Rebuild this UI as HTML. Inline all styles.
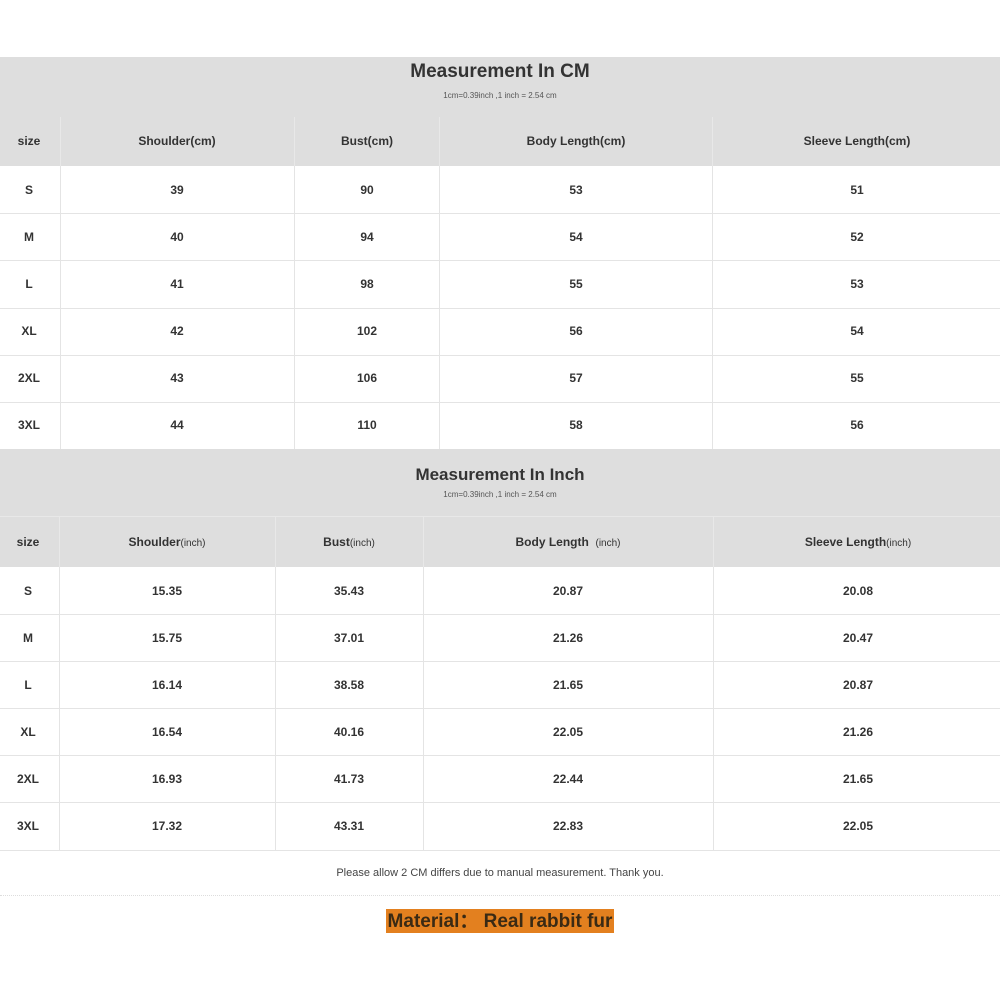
<!DOCTYPE html>
<html><head><style>
body{margin:0;width:1000px;height:1000px;background:#fff;position:relative;font-family:"Liberation Sans","DejaVu Sans",sans-serif;overflow:hidden}
.a{position:absolute}
.g{background:#dedede;left:0;width:1000px}
.t{text-align:center;color:#333;font-weight:bold}
.c{position:absolute;text-align:center;font-size:12px;font-weight:bold;color:#333;transform:translateX(-50%);white-space:nowrap}
.hl{position:absolute;left:0;width:1000px;height:1px;background:#e4e4e4}
.vl{position:absolute;width:1px;background:#e4e4e4}
</style></head><body>
<div class="a g" style="top:57px;height:109px"></div>
<div class="a t" style="top:61px;width:1000px;font-size:19px">Measurement In CM</div>
<div class="a" style="top:91px;width:1000px;text-align:center;font-size:8px;color:#555">1cm=0.39inch ,1 inch = 2.54 cm</div>
<div class="vl" style="left:60px;top:117px;height:49px;background:#e8e8e8"></div>
<div class="vl" style="left:294px;top:117px;height:49px;background:#e8e8e8"></div>
<div class="vl" style="left:439px;top:117px;height:49px;background:#e8e8e8"></div>
<div class="vl" style="left:712px;top:117px;height:49px;background:#e8e8e8"></div>
<div class="vl" style="left:60px;top:166px;height:283px"></div>
<div class="vl" style="left:294px;top:166px;height:283px"></div>
<div class="vl" style="left:439px;top:166px;height:283px"></div>
<div class="vl" style="left:712px;top:166px;height:283px"></div>
<div class="hl" style="top:213px"></div><div class="hl" style="top:260px"></div><div class="hl" style="top:308px"></div><div class="hl" style="top:355px"></div><div class="hl" style="top:402px"></div>

<div class="a g" style="top:449px;height:118px"></div>
<div class="a t" style="top:465px;width:1000px;font-size:17px">Measurement In Inch</div>
<div class="a" style="top:490px;width:1000px;text-align:center;font-size:8px;color:#555">1cm=0.39inch ,1 inch = 2.54 cm</div>
<div class="hl" style="top:516px;background:#e8e8e8"></div>
<div class="vl" style="left:59px;top:517px;height:50px;background:#e8e8e8"></div>
<div class="vl" style="left:275px;top:517px;height:50px;background:#e8e8e8"></div>
<div class="vl" style="left:423px;top:517px;height:50px;background:#e8e8e8"></div>
<div class="vl" style="left:713px;top:517px;height:50px;background:#e8e8e8"></div>
<div class="vl" style="left:59px;top:567px;height:283px"></div>
<div class="vl" style="left:275px;top:567px;height:283px"></div>
<div class="vl" style="left:423px;top:567px;height:283px"></div>
<div class="vl" style="left:713px;top:567px;height:283px"></div>
<div class="hl" style="top:614px"></div><div class="hl" style="top:661px"></div><div class="hl" style="top:708px"></div><div class="hl" style="top:755px"></div><div class="hl" style="top:802px"></div><div class="hl" style="top:850px"></div>
<div class="a" style="top:895px;left:0;width:1000px;border-top:1px dotted #ddd"></div>

<div id="cells"></div>
<div class="a" style="top:867px;width:1000px;text-align:center;font-size:11px;color:#444">Please allow 2 CM differs due to manual measurement. Thank you.</div>
<div class="a" style="top:909px;left:386px;width:228px;height:24px;background:#e3801f"></div>
<div class="a" style="top:910px;left:386px;width:228px;text-align:center;font-size:19px;font-weight:bold;color:#3a2a14;line-height:23px">Material： Real rabbit fur</div>

<div class="c" style="left:29px;top:134px">size</div><div class="c" style="left:177px;top:134px">Shoulder(cm)</div><div class="c" style="left:367px;top:134px">Bust(cm)</div><div class="c" style="left:576px;top:134px">Body Length(cm)</div><div class="c" style="left:857px;top:134px">Sleeve Length(cm)</div>
<div class="c" style="left:29px;top:183px">S</div><div class="c" style="left:177px;top:183px">39</div><div class="c" style="left:367px;top:183px">90</div><div class="c" style="left:576px;top:183px">53</div><div class="c" style="left:857px;top:183px">51</div>
<div class="c" style="left:29px;top:230px">M</div><div class="c" style="left:177px;top:230px">40</div><div class="c" style="left:367px;top:230px">94</div><div class="c" style="left:576px;top:230px">54</div><div class="c" style="left:857px;top:230px">52</div>
<div class="c" style="left:29px;top:277px">L</div><div class="c" style="left:177px;top:277px">41</div><div class="c" style="left:367px;top:277px">98</div><div class="c" style="left:576px;top:277px">55</div><div class="c" style="left:857px;top:277px">53</div>
<div class="c" style="left:29px;top:324px">XL</div><div class="c" style="left:177px;top:324px">42</div><div class="c" style="left:367px;top:324px">102</div><div class="c" style="left:576px;top:324px">56</div><div class="c" style="left:857px;top:324px">54</div>
<div class="c" style="left:29px;top:371px">2XL</div><div class="c" style="left:177px;top:371px">43</div><div class="c" style="left:367px;top:371px">106</div><div class="c" style="left:576px;top:371px">57</div><div class="c" style="left:857px;top:371px">55</div>
<div class="c" style="left:29px;top:418px">3XL</div><div class="c" style="left:177px;top:418px">44</div><div class="c" style="left:367px;top:418px">110</div><div class="c" style="left:576px;top:418px">58</div><div class="c" style="left:857px;top:418px">56</div>

<div class="c" style="left:28px;top:535px">size</div><div class="c" style="left:167px;top:535px">Shoulder<span style="font-weight:normal;font-size:10px">(inch)</span></div><div class="c" style="left:349px;top:535px">Bust<span style="font-weight:normal;font-size:10px">(inch)</span></div><div class="c" style="left:568px;top:535px">Body Length&nbsp; <span style="font-weight:normal;font-size:10px">(inch)</span></div><div class="c" style="left:858px;top:535px">Sleeve Length<span style="font-weight:normal;font-size:10px">(inch)</span></div>
<div class="c" style="left:28px;top:584px">S</div><div class="c" style="left:167px;top:584px">15.35</div><div class="c" style="left:349px;top:584px">35.43</div><div class="c" style="left:568px;top:584px">20.87</div><div class="c" style="left:858px;top:584px">20.08</div>
<div class="c" style="left:28px;top:631px">M</div><div class="c" style="left:167px;top:631px">15.75</div><div class="c" style="left:349px;top:631px">37.01</div><div class="c" style="left:568px;top:631px">21.26</div><div class="c" style="left:858px;top:631px">20.47</div>
<div class="c" style="left:28px;top:678px">L</div><div class="c" style="left:167px;top:678px">16.14</div><div class="c" style="left:349px;top:678px">38.58</div><div class="c" style="left:568px;top:678px">21.65</div><div class="c" style="left:858px;top:678px">20.87</div>
<div class="c" style="left:28px;top:725px">XL</div><div class="c" style="left:167px;top:725px">16.54</div><div class="c" style="left:349px;top:725px">40.16</div><div class="c" style="left:568px;top:725px">22.05</div><div class="c" style="left:858px;top:725px">21.26</div>
<div class="c" style="left:28px;top:772px">2XL</div><div class="c" style="left:167px;top:772px">16.93</div><div class="c" style="left:349px;top:772px">41.73</div><div class="c" style="left:568px;top:772px">22.44</div><div class="c" style="left:858px;top:772px">21.65</div>
<div class="c" style="left:28px;top:819px">3XL</div><div class="c" style="left:167px;top:819px">17.32</div><div class="c" style="left:349px;top:819px">43.31</div><div class="c" style="left:568px;top:819px">22.83</div><div class="c" style="left:858px;top:819px">22.05</div>
</body></html>
